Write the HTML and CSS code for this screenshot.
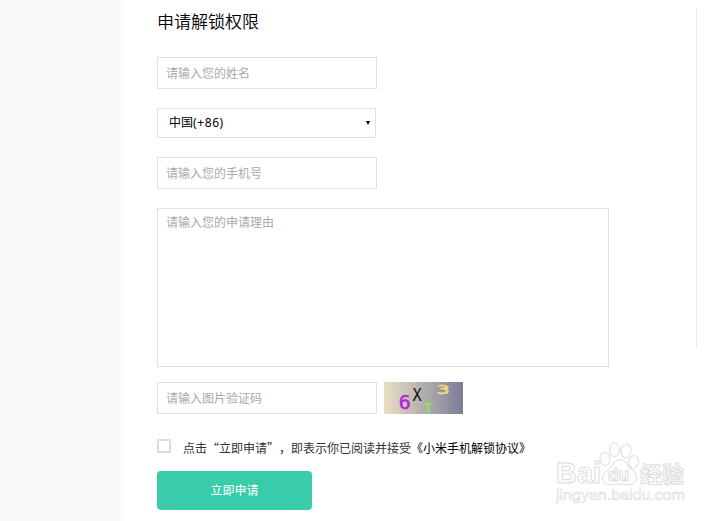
FILE: index.html
```html
<!DOCTYPE html>
<html lang="zh-CN">
<head>
<meta charset="utf-8">
<title>申请解锁权限</title>
<link rel="stylesheet" href="styles.css">
</head>
<body>
<div class="page">
  <aside class="gutter"></aside>
  <main class="content">
    <form class="form">
      <h1 class="title">申请解锁权限</h1>
      <input class="field name" type="text" placeholder="请输入您的姓名">
      <div class="select"><span>中国<span class="code">(+86)</span></span><i class="arrow"></i></div>
      <input class="field phone" type="text" placeholder="请输入您的手机号">
      <textarea class="field reason" placeholder="请输入您的申请理由"></textarea>
      <div class="captcha-row">
        <input class="field" type="text" placeholder="请输入图片验证码">
        <svg class="captcha" width="79" height="32" viewBox="0 0 79 32">
          <defs>
            <linearGradient id="bg"><stop offset="0" stop-color="#e9dfc5"/><stop offset="1" stop-color="#7b7d98"/></linearGradient>
          </defs>
          <rect width="79" height="32" fill="url(#bg)"/>
          <text class="glyph" transform="translate(14.8 26.500)" font-size="20" fill="#b222dc" stroke="#b222dc">6</text>
          <text class="glyph thin" transform="translate(28.600 19) scale(.87 1)" font-size="17.500" fill="#111">X</text>
          <text class="glyph thin" transform="translate(40.500 31) scale(.93 1)" font-size="14.500" fill="#8af52c">T</text>
          <text class="glyph" transform="translate(52.500 11.800) scale(1.700 1)" font-size="13" fill="#f3df78" stroke="#f3df78">3</text>
        </svg>
      </div>
      <label class="agree">
        <input class="check" type="checkbox">
        <span>点击“立即申请<span class="close-quote">”</span>，即表示你已阅读并接受<a class="terms">《小米手机解锁协议》</a></span>
      </label>
      <button class="submit" type="button">立即申请</button>
    </form>
    <div class="divider"></div>
  </main>
</div>
<svg class="watermark" width="150" height="80" viewBox="0 0 150 80">
  <g fill="#fff" stroke="#dcdcdc" stroke-width="1">
    <text class="brand" x="5" y="49" font-size="30" textLength="45" lengthAdjust="spacingAndGlyphs">Bai</text>
    <ellipse cx="54" cy="25" rx="5" ry="6.500" transform="rotate(-8 54 25)"/>
    <ellipse cx="63.500" cy="16" rx="5" ry="6.800"/>
    <ellipse cx="75" cy="17" rx="5" ry="6.800" transform="rotate(8 75 17)"/>
    <ellipse cx="82.500" cy="28" rx="5" ry="6.300" transform="rotate(14 82.500 28)"/>
    <path d="M69 26c-5 0-6 3-9 7-4 4-9 6-8.500 11.500.5 5 5 6.500 10 6 5-.6 9-.6 14 0s9.500-1 10-6.500c.4-5-4-7-8-11.500-3-4-4.500-6.500-8.500-6.500z"/>
    <text class="brand" x="57" y="47" font-size="18" textLength="21" lengthAdjust="spacingAndGlyphs">du</text>
    <text class="cjk" x="89" y="47.500" font-size="22">经验</text>
    <text class="url" x="5" y="66" font-size="15" textLength="129" lengthAdjust="spacingAndGlyphs">jingyan.baidu.com</text>
  </g>
</svg>
</body>
</html>
```
FILE: styles.css
```css
* { box-sizing: border-box; }
body {
  margin: 0;
  background: #fff;
  font: 12px/18px "Noto Sans CJK SC", sans-serif;
  color: #333;
  overflow: hidden;
}
.page { display: flex; height: 521px; }
.gutter { flex: 0 0 124px; background: #fafafa; }
.content { display: flex; flex: 1; padding-left: 33px; }
.form { display: flex; flex-direction: column; align-items: flex-start; width: 539px; }
.title {
  margin: 9px 0 24px;
  font-size: 17px;
  line-height: 24px;
  font-weight: 350;
  color: #000;
}
.field {
  display: block;
  width: 220px;
  height: 32px;
  margin: 0;
  padding: 0 8px 2px;
  border: 1px solid #e0e0e0;
  border-radius: 0;
  background: #fff;
  font: inherit;
  outline: none;
}
.field::placeholder { color: #a9a9a9; opacity: 1; }
.select {
  display: flex;
  align-items: center;
  justify-content: space-between;
  width: 219px;
  height: 30px;
  margin: 19px 0;
  padding: 0 5px 0 11px;
  border: 1px solid #e0e0e0;
  color: #000;
  font-family: "Noto Sans", "Noto Sans CJK SC", sans-serif;
}
.code { letter-spacing: .6px; }
.arrow { border: solid transparent; border-width: 4px 2.5px 0; border-top-color: #000; }
.reason { width: 452px; height: 159px; margin: 19px 0 15px; padding: 4px 8px; resize: none; }
.captcha-row { display: flex; gap: 7px; }
.captcha { display: block; overflow: visible; }
.glyph { font-family: "DejaVu Sans Mono", monospace; stroke-width: .5; }
.thin { stroke: none; }
.agree { display: flex; margin-top: 25px; height: 18px; white-space: nowrap; }
.agree span { line-height: 18px; }
.close-quote { margin-right: 6px; }
.check {
  appearance: none;
  width: 14px;
  height: 14px;
  margin: 0 12px 0 0;
  border: 2px solid #dcdcdc;
  background: #fff;
}
.terms { color: #000; }
.submit {
  width: 155px;
  height: 39px;
  margin-top: 14px;
  padding: 0 0 2px;
  border: 0;
  border-radius: 4px;
  background: #3accaa;
  color: #fff;
  font: inherit;
}
.divider { width: 1px; height: 339px; margin-top: 9px; background: #e8e8e8; }
.watermark { position: absolute; left: 551px; top: 434px; }
.brand { font-family: "Liberation Sans", sans-serif; font-weight: 700; }
.cjk { font-family: "Noto Sans CJK SC", sans-serif; font-weight: 700; }
.url { font-family: "Liberation Sans", sans-serif; stroke-width: .6; }
```
